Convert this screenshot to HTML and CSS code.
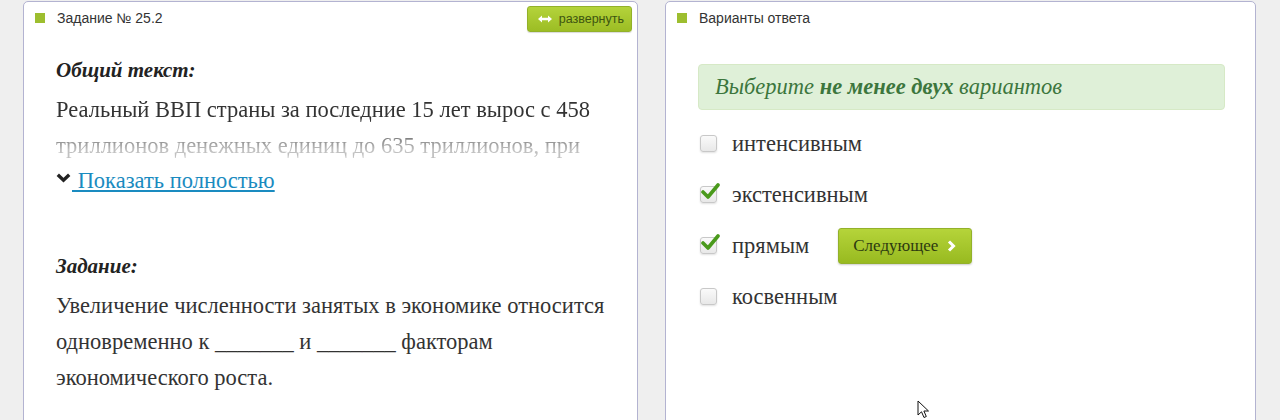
FILE: index.html
```html
<!DOCTYPE html>
<html lang="ru">
<head>
<meta charset="utf-8">
<link rel="stylesheet" href="styles.css">
</head>
<body>
<div class="page">
  <section class="panel panel-task">
    <header class="panel-head">
      <span class="marker"></span>
      <span class="head-title">Задание № 25.2</span>
      <button class="expand-btn"><svg class="expand-ico" width="14" height="8" viewBox="0 0 14 8"><path d="M0 4 L4 0.5 L4 2.8 L10 2.8 L10 0.5 L14 4 L10 7.5 L10 5.2 L4 5.2 L4 7.5 Z" fill="#fff"/></svg>развернуть</button>
    </header>
    <div class="panel-body">
      <h3 class="sub-title">Общий текст:</h3>
      <p class="text fade">Реальный ВВП страны за последние 15 лет вырос с 458 триллионов денежных единиц до 635 триллионов, при этом численность занятых увеличилась на 12 процентов.</p>
      <a class="show-more" href="#"><svg class="chev" width="15" height="10" viewBox="0 0 15 10"><path d="M1.8 1.8 L7.5 7.2 L13.2 1.8" fill="none" stroke="#222" stroke-width="3.4"/></svg><span class="link-text">&nbsp;Показать полностью</span></a>
      <h3 class="sub-title task-title">Задание:</h3>
      <p class="text">Увеличение численности занятых в экономике относится одновременно к _______ и _______ факторам экономического роста.</p>
    </div>
  </section>
  <section class="panel panel-answers">
    <header class="panel-head">
      <span class="marker"></span>
      <span class="head-title">Варианты ответа</span>
    </header>
    <div class="panel-body">
      <div class="alert">Выберите <b>не менее двух</b> вариантов</div>
      <ul class="options">
        <li class="option"><span class="cb"></span><span class="opt-label">интенсивным</span></li>
        <li class="option"><span class="cb checked"><svg class="tick" width="20" height="18" viewBox="0 0 20 18"><path d="M2 9 L7 14 L17 2" fill="none" stroke="#4a9a1c" stroke-width="3.6" stroke-linecap="round" stroke-linejoin="round"/></svg></span><span class="opt-label">экстенсивным</span></li>
        <li class="option"><span class="cb checked"><svg class="tick" width="20" height="18" viewBox="0 0 20 18"><path d="M2 9 L7 14 L17 2" fill="none" stroke="#4a9a1c" stroke-width="3.6" stroke-linecap="round" stroke-linejoin="round"/></svg></span><span class="opt-label">прямым</span><button class="next-btn">Следующее<svg class="next-ico" width="9" height="12" viewBox="0 0 9 12"><path d="M2 1.5 L6.5 6 L2 10.5" fill="none" stroke="#fff" stroke-width="3"/></svg></button></li>
        <li class="option"><span class="cb"></span><span class="opt-label">косвенным</span></li>
      </ul>
    </div>
  </section>
</div>
<svg class="cursor" width="14" height="20" viewBox="0 0 14 20"><path d="M1 1 L1 15 L4.5 11.8 L7 17.5 L9.3 16.5 L6.9 11 L11.5 11 Z" fill="#fff" stroke="#111" stroke-width="1" stroke-linejoin="round"/></svg>
</body>
</html>
```
FILE: styles.css
```css
html, body {
  margin: 0;
  padding: 0;
}
body {
  background: #efefef;
  width: 1280px;
  height: 420px;
  overflow: hidden;
  position: relative;
}
.page {
  display: flex;
  gap: 27px;
  padding: 1px 0 0 23px;
  align-items: flex-start;
}
.panel {
  background: #fff;
  border: 1px solid #b3b3d1;
  border-radius: 5px 5px 0 0;
  height: 460px;
  box-sizing: border-box;
}
.panel-task { width: 615px; }
.panel-answers { width: 591px; }
.panel-head {
  display: flex;
  align-items: center;
  height: 32px;
  padding: 0 5px 0 11px;
  font-family: "Liberation Sans", Arial, sans-serif;
  font-size: 14px;
  color: #333;
}
.marker {
  width: 10px;
  height: 10px;
  background: #9dbe2f;
  margin-right: 12px;
}
.head-title { flex: 1; }
.expand-btn {
  display: flex;
  align-items: center;
  gap: 7px;
  height: 26px;
  padding: 0 7px 0 10px;
  margin-top: 1px;
  border: 1px solid #93b12a;
  border-radius: 3px;
  background: linear-gradient(#b4d33b, #9cbd24);
  color: #3d5510;
  font-family: "Liberation Sans", Arial, sans-serif;
  font-size: 12.5px;
  box-shadow: 0 1px 1px rgba(0,0,0,0.15);
}
.panel-body {
  padding: 18px 18px 0 32px;
  font-family: "Liberation Serif", "Times New Roman", serif;
  color: #333;
}
.sub-title {
  margin: 0 0 4px 0;
  font-size: 21px;
  font-weight: bold;
  font-style: italic;
  line-height: 36px;
  color: #222;
}
.text {
  margin: 0;
  font-size: 22.5px;
  line-height: 36px;
}
.fade {
  height: 72px;
  overflow: hidden;
  -webkit-mask-image: linear-gradient(to bottom, #000 45%, rgba(0,0,0,0.3) 80%);
  mask-image: linear-gradient(to bottom, #000 45%, rgba(0,0,0,0.3) 80%);
}
.show-more {
  display: flex;
  align-items: center;
  gap: 1px;
  height: 34px;
  text-decoration: none;
  font-size: 22.5px;
}
.chev { margin-top: -6px; }
.link-text {
  color: #1a8bc0;
  text-decoration: underline;
}
.task-title { margin-top: 50px; }
.alert {
  margin-top: 12px;
  height: 46px;
  box-sizing: border-box;
  padding: 0 16px;
  display: flex;
  align-items: center;
  background: #dff0d8;
  border: 1px solid #d6e9c6;
  border-radius: 4px;
  color: #3c763d;
  font-size: 22.5px;
  font-style: italic;
  white-space: pre;
  margin-right: 12px;
}
.options {
  list-style: none;
  margin: 8px 0 0 0;
  padding: 0;
}
.option {
  display: flex;
  align-items: center;
  height: 51px;
  font-size: 22.5px;
}
.cb {
  position: relative;
  width: 15px;
  height: 15px;
  margin-left: 2px;
  border: 1px solid #c8c8c8;
  border-radius: 3px;
  background: linear-gradient(#fafafa, #e8e8e8);
  box-shadow: 0 1px 2px rgba(0,0,0,0.12);
  margin-right: 15px;
}
.tick {
  position: absolute;
  left: 0;
  top: -4px;
}
.next-btn {
  display: flex;
  align-items: center;
  gap: 9px;
  margin-left: 29px;
  height: 36px;
  padding: 0 15px 0 14px;
  border: 1px solid #93b12a;
  border-radius: 3px;
  background: linear-gradient(#b5d43a, #98ba20);
  box-shadow: 0 1px 2px rgba(0,0,0,0.2);
  font-family: "Liberation Serif", "Times New Roman", serif;
  font-size: 17px;
  color: #2d3a10;
}
.cursor {
  position: absolute;
  left: 917px;
  top: 400px;
}
```
